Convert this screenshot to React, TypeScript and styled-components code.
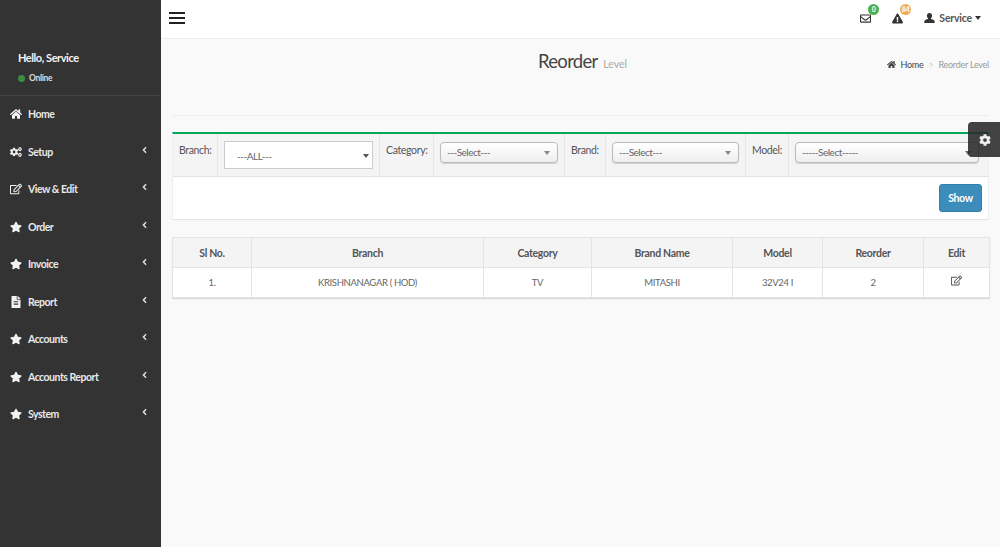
import { FC, ReactNode } from 'react';
import styled, { createGlobalStyle } from 'styled-components';
import {
    FaHome,
    FaCogs,
    FaRegEdit,
    FaStar,
    FaFileAlt,
    FaAngleLeft,
    FaRegEnvelope,
    FaExclamationTriangle,
    FaCog,
} from 'react-icons/fa';

const font = `'Lato', 'Noto Sans', sans-serif`;

const GlobalStyle = createGlobalStyle`
    html, body {
        margin: 0;
        padding: 0;
        height: 100%;
        overflow: hidden;
    }
    body {
        font-family: ${font};
        background: #f9f9f9;
        color: #555;
    }
    * {
        box-sizing: border-box;
    }
`;

const Page = styled.div`
    display: flex;
    width: 1000px;
    height: 547px;
    position: relative;
    overflow: hidden;
`;

const Sidebar = styled.aside`
    width: 161px;
    flex-shrink: 0;
    background: #333;
    color: #eee;
`;

const UserPanel = styled.div`
    height: 95.5px;
    padding: 49px 0 0 18px;
    border-bottom: 1px solid #444;
`;

const Hello = styled.div`
    font-size: 11px;
    font-weight: 700;
    letter-spacing: -0.45px;
    line-height: 17px;
    color: #f4f4f4;
`;

const Online = styled.div`
    display: flex;
    align-items: center;
    gap: 4px;
    margin-top: 6px;
    font-size: 8.5px;
    font-weight: 700;
    letter-spacing: -0.35px;
    line-height: 13px;
    color: #ddd;
`;

const Dot = styled.span`
    width: 7px;
    height: 7px;
    border-radius: 50%;
    background: #3c8d40;
`;

const MenuItem = styled.div`
    display: flex;
    align-items: center;
    height: 37.5px;
    padding: 0 12px 0 10px;
    font-size: 10.5px;
    font-weight: 700;
    letter-spacing: -0.5px;
    color: #e8e8e8;
    svg.lead {
        width: 12px;
        height: 12px;
        margin-right: 6px;
        flex-shrink: 0;
        color: #f2f2f2;
    }
    span {
        flex: 1;
    }
    svg.angle {
        width: 9px;
        height: 10px;
        margin-top: -4px;
        color: #ddd;
    }
`;

const Main = styled.main`
    flex: 1;
    min-width: 0;
`;

const Topbar = styled.header`
    height: 39px;
    background: #fff;
    border-bottom: 1px solid #eee;
    display: flex;
    align-items: center;
    padding: 0 19px 2px 8px;
`;

const Burger = styled.div`
    width: 16px;
    display: flex;
    flex-direction: column;
    gap: 3px;
    margin-right: auto;
    i {
        display: block;
        height: 2px;
        background: #222;
    }
`;

const NavIcon = styled.div`
    position: relative;
    display: flex;
    color: #333;
    margin-right: 21px;
    svg {
        width: 11px;
        height: 11px;
    }
`;

const Badge = styled.span<{ $bg: string }>`
    position: absolute;
    top: -9px;
    left: 8px;
    width: 11px;
    height: 11px;
    border-radius: 50%;
    background: ${(p) => p.$bg};
    color: #fff;
    font-size: 7px;
    font-weight: 700;
    line-height: 11px;
    text-align: center;
`;

const UserMenu = styled.div`
    display: flex;
    align-items: center;
    font-size: 10.5px;
    font-weight: 700;
    letter-spacing: -0.2px;
    color: #555;
    svg {
        width: 11px;
        height: 12px;
        color: #333;
        margin-right: 4px;
    }
`;

const Arrow = styled.i<{ $color?: string }>`
    display: block;
    flex-shrink: 0;
    width: 0;
    height: 0;
    margin-left: 3px;
    border-style: solid;
    border-color: ${(p) => p.$color ?? '#333'} transparent transparent;
    border-width: 4px 3px 0;
`;

const Content = styled.div`
    padding: 0 11px;
`;

const TitleRow = styled.div`
    height: 77px;
    display: flex;
    align-items: flex-start;
    justify-content: space-between;
    border-bottom: 1px solid #eee;
`;

const Title = styled.div`
    margin: 9px 0 0 366px;
    font-size: 18.5px;
    letter-spacing: -0.7px;
    line-height: 27px;
    color: #444;
    small {
        margin-left: 2px;
        font-size: 10.5px;
        letter-spacing: 0;
        color: #aaa;
    }
`;

const Breadcrumb = styled.div`
    display: flex;
    align-items: center;
    margin-top: 19px;
    font-size: 9px;
    letter-spacing: -0.25px;
    line-height: 13px;
    color: #444;
    svg {
        width: 9px;
        height: 9px;
        margin-right: 4px;
    }
    i {
        font-style: normal;
        margin: 0 5px;
        color: #ccc;
    }
    em {
        font-style: normal;
        color: #999;
    }
`;

const FilterPanel = styled.section`
    margin-top: 16px;
    background: #fff;
    border-top: 2px solid #00a65a;
    border-bottom: 1px solid #e4e4e4;
    border-left: 1px solid #eee;
    border-right: 1px solid #eee;
`;

const FilterBar = styled.div`
    display: flex;
    height: 43px;
    background: #f4f4f5;
    border-bottom: 1px solid #e2e2e2;
`;

const Cell = styled.div<{ $w: number }>`
    width: ${(p) => p.$w}px;
    flex-shrink: 0;
    display: flex;
    align-items: flex-start;
    padding: 8px 6px 0;
    border-right: 1px solid #e6e6e6;
    font-size: 10.5px;
    letter-spacing: -0.35px;
    line-height: 17px;
    color: #555;
    &:last-child {
        border-right: 0;
        padding-right: 10px;
    }
`;

const PlainSelect = styled.div`
    width: 151px;
    height: 28px;
    margin-top: -1px;
    display: flex;
    align-items: center;
    justify-content: space-between;
    padding: 2px 3px 0 12px;
    background: #fff;
    border: 1px solid #ccc;
    font-size: 10px;
    letter-spacing: -0.45px;
    color: #666;
`;

const RoundSelect = styled.div`
    flex: 1;
    height: 21px;
    display: flex;
    align-items: center;
    justify-content: space-between;
    padding: 0 7px 0 6px;
    background: linear-gradient(#fff, #eee);
    border: 1px solid #bbb;
    border-radius: 4px;
    box-shadow: 0 1px 1px rgba(0, 0, 0, 0.15);
    font-size: 10px;
    letter-spacing: -0.5px;
    color: #666;
`;

const ShowRow = styled.div`
    height: 42px;
    display: flex;
    align-items: center;
    justify-content: flex-end;
    padding-right: 6px;
`;

const ShowButton = styled.button`
    width: 43px;
    height: 28px;
    padding: 0;
    background: #3c8dbc;
    border: 1px solid #367fa9;
    border-radius: 3px;
    color: #fff;
    font-family: ${font};
    font-size: 10.5px;
    font-weight: 700;
    letter-spacing: -0.4px;
`;

const Table = styled.table`
    width: 817px;
    margin-top: 17px;
    table-layout: fixed;
    border-collapse: collapse;
    background: #fff;
    box-shadow: 0 1px 1px rgba(0, 0, 0, 0.12);
    th,
    td {
        border: 1px solid #e4e4e4;
        text-align: center;
        padding: 0;
    }
    th {
        height: 30px;
        background: #f4f4f5;
        font-size: 10.5px;
        font-weight: 700;
        letter-spacing: -0.3px;
        color: #555;
    }
    td {
        height: 30px;
        font-size: 9.5px;
        letter-spacing: -0.35px;
        color: #666;
    }
    td svg {
        width: 11px;
        height: 11px;
        margin-bottom: 2px;
        color: #555;
    }
`;

const GearTab = styled.div`
    position: absolute;
    top: 122px;
    right: 0;
    width: 32px;
    height: 35px;
    display: flex;
    align-items: center;
    justify-content: center;
    padding: 1px 0 0 1px;
    background: rgba(40, 40, 40, 0.88);
    border-radius: 4px 0 0 4px;
    color: #eee;
    svg {
        width: 12px;
        height: 12px;
    }
`;

const menu: { label: string; icon: ReactNode; sub?: boolean }[] = [
    { label: 'Home', icon: <FaHome className="lead" /> },
    { label: 'Setup', icon: <FaCogs className="lead" />, sub: true },
    { label: 'View & Edit', icon: <FaRegEdit className="lead" />, sub: true },
    { label: 'Order', icon: <FaStar className="lead" />, sub: true },
    { label: 'Invoice', icon: <FaStar className="lead" />, sub: true },
    { label: 'Report', icon: <FaFileAlt className="lead" />, sub: true },
    { label: 'Accounts', icon: <FaStar className="lead" />, sub: true },
    { label: 'Accounts Report', icon: <FaStar className="lead" />, sub: true },
    { label: 'System', icon: <FaStar className="lead" />, sub: true },
];

const columns = [
    { label: 'Sl No.', width: 79 },
    { label: 'Branch', width: 232 },
    { label: 'Category', width: 108 },
    { label: 'Brand Name', width: 141 },
    { label: 'Model', width: 90 },
    { label: 'Reorder', width: 101 },
    { label: 'Edit', width: 66 },
];

const UserIcon = () => (
    <svg viewBox="0 0 12 12" fill="currentColor">
        <path d="M6 .5c-1.8 0-2.8 1.3-2.8 3 0 1.2.5 2.2 1.2 2.8v.9c-1.5.5-3.6 1-3.9 2.3l-.2 2h11.4l-.2-2c-.3-1.3-2.4-1.8-3.9-2.3v-.9c.7-.6 1.2-1.6 1.2-2.8 0-1.7-1-3-2.8-3z" />
    </svg>
);

const App: FC = () => (
    <Page>
        <GlobalStyle />
        <Sidebar>
            <UserPanel>
                <Hello>Hello, Service</Hello>
                <Online>
                    <Dot />
                    Online
                </Online>
            </UserPanel>
            {menu.map((item) => (
                <MenuItem key={item.label}>
                    {item.icon}
                    <span>{item.label}</span>
                    {item.sub && <FaAngleLeft className="angle" />}
                </MenuItem>
            ))}
        </Sidebar>
        <Main>
            <Topbar>
                <Burger>
                    <i />
                    <i />
                    <i />
                </Burger>
                <NavIcon>
                    <FaRegEnvelope />
                    <Badge $bg="#4caf50">0</Badge>
                </NavIcon>
                <NavIcon>
                    <FaExclamationTriangle />
                    <Badge $bg="#f0ad4e">84</Badge>
                </NavIcon>
                <UserMenu>
                    <UserIcon />
                    Service
                    <Arrow />
                </UserMenu>
            </Topbar>
            <Content>
                <TitleRow>
                    <Title>
                        Reorder <small>Level</small>
                    </Title>
                    <Breadcrumb>
                        <FaHome />
                        Home
                        <i>&gt;</i>
                        <em>Reorder Level</em>
                    </Breadcrumb>
                </TitleRow>
                <FilterPanel>
                    <FilterBar>
                        <Cell $w={45}>Branch:</Cell>
                        <Cell $w={162}>
                            <PlainSelect>
                                ---ALL---
                                <Arrow $color="#555" />
                            </PlainSelect>
                        </Cell>
                        <Cell $w={54}>Category:</Cell>
                        <Cell $w={131}>
                            <RoundSelect>
                                ---Select---
                                <Arrow $color="#888" />
                            </RoundSelect>
                        </Cell>
                        <Cell $w={41}>Brand:</Cell>
                        <Cell $w={140}>
                            <RoundSelect>
                                ---Select---
                                <Arrow $color="#888" />
                            </RoundSelect>
                        </Cell>
                        <Cell $w={43}>Model:</Cell>
                        <Cell $w={200}>
                            <RoundSelect>
                                -----Select-----
                                <Arrow $color="#666" />
                            </RoundSelect>
                        </Cell>
                    </FilterBar>
                    <ShowRow>
                        <ShowButton>Show</ShowButton>
                    </ShowRow>
                </FilterPanel>
                <Table>
                    <colgroup>
                        {columns.map((col) => (
                            <col key={col.label} width={col.width} />
                        ))}
                    </colgroup>
                    <thead>
                        <tr>
                            {columns.map((col) => (
                                <th key={col.label}>{col.label}</th>
                            ))}
                        </tr>
                    </thead>
                    <tbody>
                        <tr>
                            <td>1.</td>
                            <td>KRISHNANAGAR ( HOD)</td>
                            <td>TV</td>
                            <td>MITASHI</td>
                            <td>32V24 I</td>
                            <td>2</td>
                            <td>
                                <FaRegEdit />
                            </td>
                        </tr>
                    </tbody>
                </Table>
            </Content>
        </Main>
        <GearTab>
            <FaCog />
        </GearTab>
    </Page>
);

export default App;
